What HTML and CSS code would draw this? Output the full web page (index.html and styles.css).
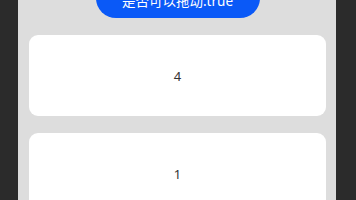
FILE: index.html
```html
<!DOCTYPE html>
<html lang="zh">
<head>
  <meta charset="UTF-8">
  <title>drag list</title>
  <link rel="stylesheet" href="styles.css">
</head>
<body>
  <main class="page">
    <div class="toggle">是否可以拖动:true</div>
    <ul class="list">
      <li class="item">4</li>
      <li class="item">1</li>
    </ul>
  </main>
</body>
</html>
```

FILE: styles.css
```css
* {
  margin: 0;
  padding: 0;
  box-sizing: border-box;
}

body {
  width: 100%;
  height: 100vh;
  overflow: hidden;
  background: #2b2b2b;
  font-family: "Noto Sans", "Noto Sans CJK SC", sans-serif;
}

.page {
  width: 318px;
  height: 100vh;
  margin-left: 18px;
  padding: 0 10px 0 11px;
  background: #dddddd;
  display: flex;
  flex-direction: column;
  align-items: center;
}

.toggle {
  flex-shrink: 0;
  width: 164px;
  height: 40px;
  margin-top: -22px;
  padding-top: 4px;
  border-radius: 20px;
  background: #0a59f7;
  color: #fff;
  font-size: 13.5px;
  display: flex;
  align-items: center;
  justify-content: center;
}

.list {
  flex-shrink: 0;
  list-style: none;
  width: 100%;
  margin-top: 17px;
  display: flex;
  flex-direction: column;
  gap: 17px;
}

.item {
  flex-shrink: 0;
  height: 81px;
  border-radius: 9px;
  background: #fff;
  color: #333;
  font-size: 13px;
  display: flex;
  align-items: center;
  justify-content: center;
}
```
